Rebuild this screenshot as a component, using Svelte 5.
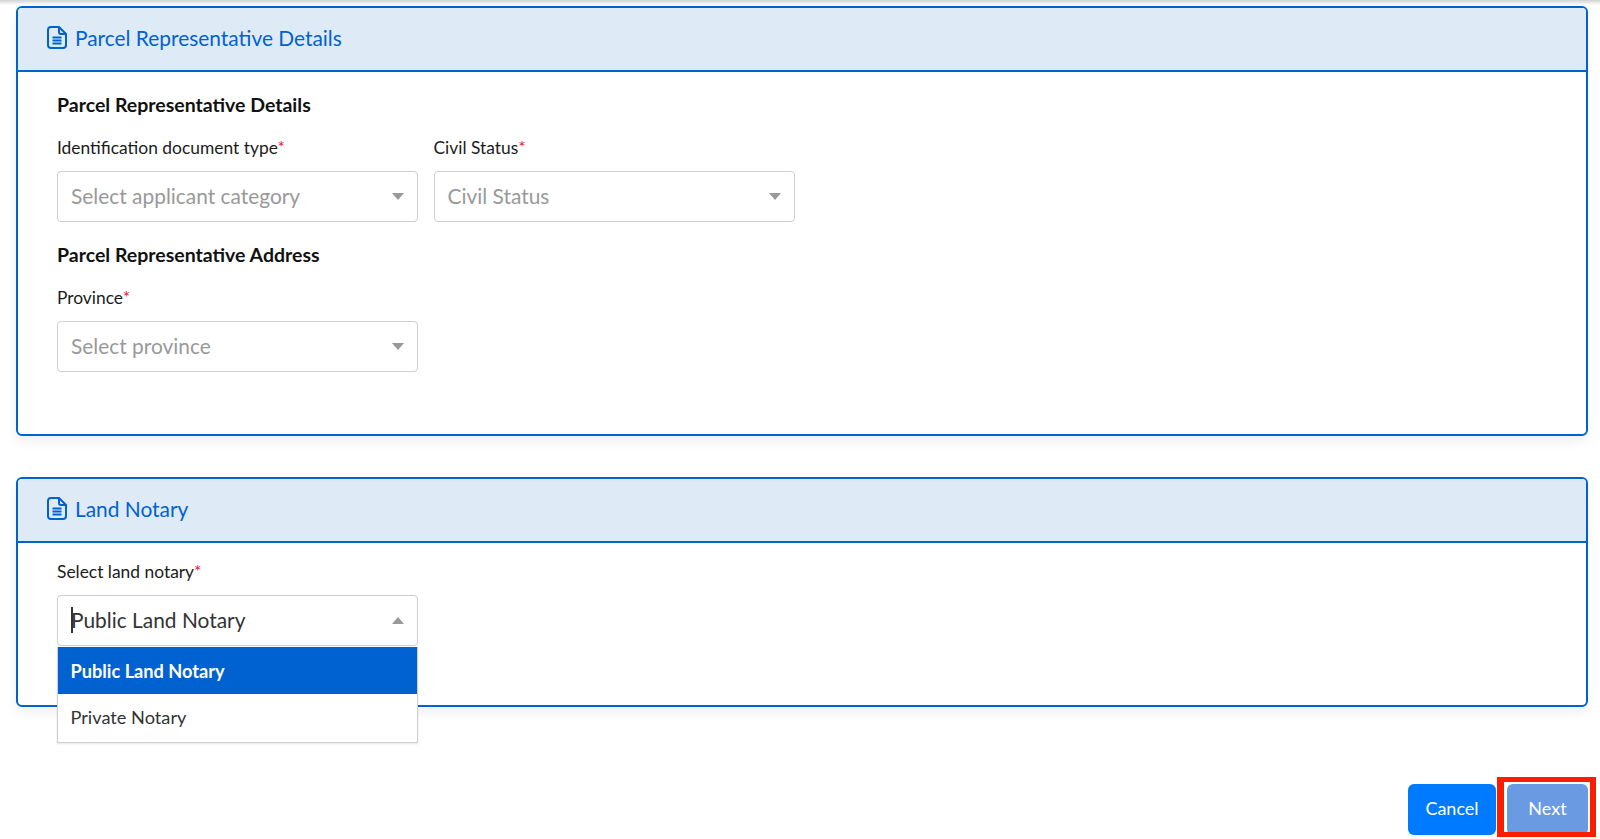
<script>
  const docIconPaths = ['M4 1h8l7 7v11a3 3 0 0 1-3 3H4a3 3 0 0 1-3-3V4a3 3 0 0 1 3-3Z', 'M12 1.5V6a2 2 0 0 0 2 2h4.5', 'M5.5 11.5h9M5.5 14.5h9M5.5 17.5h9'];
  const labels = { idType: 'Identification document type', civil: 'Civil Status', province: 'Province', notary: 'Select land notary' };
</script>

{#snippet doc()}
  <svg class="doc" viewBox="0 0 20 23" aria-hidden="true">
    {#each docIconPaths as d}<path {d} />{/each}
  </svg>
{/snippet}

{#snippet field(label, value, extra = '')}
  <div class="field">
    <div class="label">{label}<span class="req">*</span></div>
    <div class="select {extra}">
      <span class="value">{value}</span>
      <span class="caret"></span>
    </div>
  </div>
{/snippet}

<div class="page">
  <div class="topshade"></div>

  <section class="card first">
    <header class="head">{@render doc()}<span class="title">Parcel Representative Details</span></header>
    <div class="body">
      <h3>Parcel Representative Details</h3>
      <div class="row">
        {@render field(labels.idType, 'Select applicant category')}
        {@render field(labels.civil, 'Civil Status')}
      </div>
      <h3 class="second-title">Parcel Representative Address</h3>
      <div class="row">
        {@render field(labels.province, 'Select province')}
      </div>
    </div>
  </section>

  <section class="card second">
    <header class="head">{@render doc()}<span class="title">Land Notary</span></header>
    <div class="body notary">
      <div class="field">
        <div class="label">{labels.notary}<span class="req">*</span></div>
        <div class="select open">
          <span class="cursor"></span>
          <span class="value filled">Public Land Notary</span>
          <span class="caret up"></span>
          <div class="menu">
            <div class="opt active">Public Land Notary</div>
            <div class="opt">Private Notary</div>
          </div>
        </div>
      </div>
    </div>
  </section>

  <footer class="actions">
    <button class="btn cancel">Cancel</button>
    <span class="hl"><button class="btn next">Next</button></span>
  </footer>
</div>

<style>
  :global(body) { margin: 0; background: #fff; }
  .page {
    position: relative;
    height: 839px;
    overflow: hidden;
    padding: 6px 12px 0 16px;
    box-sizing: border-box;
    font-family: "Lato", "Liberation Sans", sans-serif;
    color: #1b1b1b;
  }
  .topshade {
    position: absolute; left: 0; right: 0; top: 0; height: 5px;
    background: linear-gradient(#d2d2d2, #fff);
  }
  .card {
    position: relative;
    border: 2px solid #0062d1;
    border-radius: 6px;
    background: #fff;
    box-sizing: border-box;
    box-shadow: 0 6px 12px rgba(0,0,0,.06);
  }
  .first { height: 430px; }
  .second { height: 230px; margin-top: 41px; }
  .head {
    height: 64px;
    box-sizing: border-box;
    background: #deebf7;
    border-bottom: 2px solid #0062d1;
    border-radius: 4px 4px 0 0;
    display: flex;
    align-items: center;
    padding-left: 29px;
    gap: 8px;
    color: #0062d1;
    font-size: 20.9px;
  }
  .title { position: relative; top: -2px; }
  .doc { width: 20px; height: 23px; flex: none; fill: none; stroke: #0062d1; stroke-width: 2; stroke-linejoin: round; margin-bottom: 3px; }
  .body { padding: 22px 39px 0; }
  .notary { padding-top: 18px; }
  h3 { margin: 0; font-size: 19.5px; line-height: 22px; font-weight: 700; color: #111; }
  .second-title { margin-top: 22px; }
  .row { display: flex; gap: 15.5px; margin-top: 21px; }
  .field { width: 361px; }
  .label { font-size: 17.4px; line-height: 21px; color: #1b1b1b; }
  .req { color: #e8173f; }
  .select {
    position: relative;
    margin-top: 13px;
    height: 51px;
    box-sizing: border-box;
    border: 1.5px solid #cfcfcf;
    border-radius: 4px;
    display: flex;
    align-items: center;
    padding-left: 13px;
    padding-bottom: 3px;
    font-size: 20.9px;
    color: #999;
    background: #fff;
  }
  .value.filled { color: #333; }
  .open { border-color: #cdcdcd; }
  .cursor { position: absolute; left: 13px; top: 11px; height: 26px; width: 1.5px; background: #333; }
  .caret {
    position: absolute; right: 13px; top: 21px;
    border-left: 6.5px solid transparent; border-right: 6.5px solid transparent;
    border-top: 7px solid #999;
  }
  .caret.up { border-top: 0; border-bottom: 7px solid #999; }
  .menu {
    position: absolute; left: -1.5px; right: -1px; top: 51px;
    background: #fff;
    border: 1px solid #cfcfcf;
    border-top: 0;
    box-shadow: 0 1px 2px rgba(0,0,0,.1);
    z-index: 2;
  }
  .opt { height: 47px; display: flex; align-items: center; padding-left: 13px; font-size: 18.2px; color: #333; }
  .opt:not(.active) { height: 48px; padding-bottom: 3px; box-sizing: border-box; }
  .opt.active { background: #0062d1; color: #fff; font-weight: 700; }
  .actions {
    position: absolute; right: 4px; top: 777px;
    display: flex; align-items: flex-start;
  }
  .btn {
    font: inherit; font-size: 18px; color: #fff; border: 0; border-radius: 6px;
    height: 51px; margin-top: 7px; padding: 0 0 3px;
  }
  .cancel { width: 88px; background: #007bff; margin-right: 1px; }
  .hl {
    display: block; box-sizing: border-box; width: 99px; height: 60px;
    border: solid #f71f00; border-width: 5px 6px 5px 7px; padding-left: 3px;
    overflow: hidden;
  }
  .next { width: 81px; background: #6a9ae2; margin-top: 2px; display: block; }
</style>
